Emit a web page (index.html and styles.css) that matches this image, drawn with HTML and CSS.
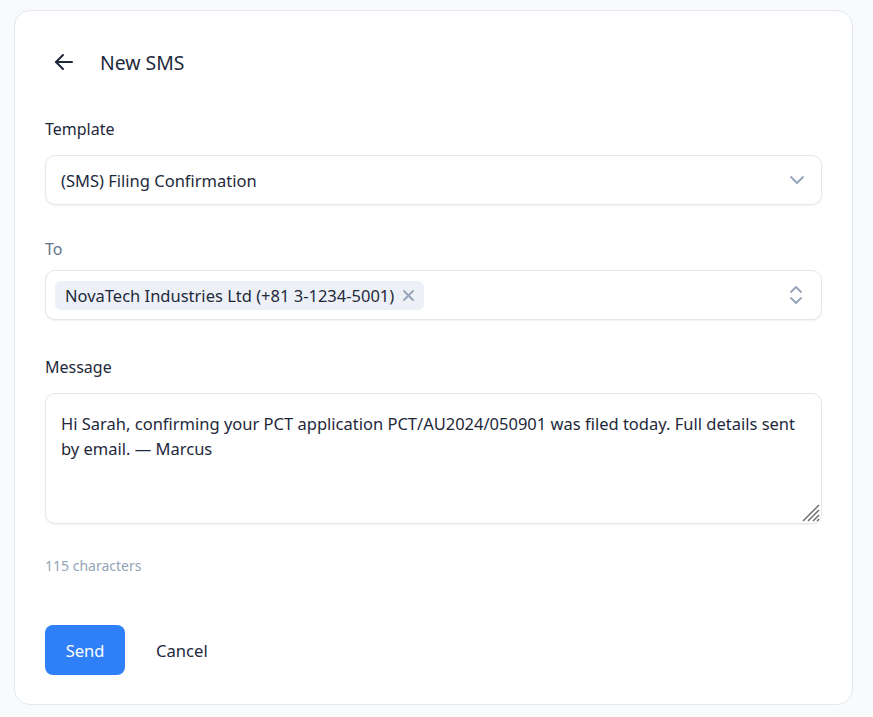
FILE: index.html
```html
<!DOCTYPE html>
<html lang="en">
<head>
    <meta charset="UTF-8">
    <meta name="viewport" content="width=device-width, initial-scale=1.0">
    <title>New SMS</title>
    <link rel="stylesheet" href="styles.css">
</head>
<body>
    <div class="card">
        <div class="header">
            <button class="back" aria-label="Back">
                <svg width="20" height="18" viewBox="0 0 20 18" fill="none" stroke="#1e293b" stroke-width="2" stroke-linecap="round" stroke-linejoin="round">
                    <path d="M18 9H2"/>
                    <path d="M9 2L2 9l7 7"/>
                </svg>
            </button>
            <h1>New SMS</h1>
        </div>

        <div class="field">
            <label class="label">Template</label>
            <div class="input select">
                <span>(SMS) Filing Confirmation</span>
                <svg width="16" height="10" viewBox="0 0 16 10" fill="none" stroke="#94a3b8" stroke-width="1.8" stroke-linecap="round" stroke-linejoin="round">
                    <path d="M2 2l6 6 6-6"/>
                </svg>
            </div>
        </div>

        <div class="field to-field">
            <label class="label muted">To</label>
            <div class="input recipients">
                <span class="chip">
                    NovaTech Industries Ltd (+81 3-1234-5001)
                    <svg width="11" height="11" viewBox="0 0 11 11" fill="none" stroke="#94a3b8" stroke-width="1.8" stroke-linecap="round">
                        <path d="M1 1l9 9M10 1L1 10"/>
                    </svg>
                </span>
                <svg width="14" height="20" viewBox="0 0 14 20" fill="none" stroke="#94a3b8" stroke-width="1.8" stroke-linecap="round" stroke-linejoin="round">
                    <path d="M2 7l5-5 5 5"/>
                    <path d="M2 13l5 5 5-5"/>
                </svg>
            </div>
        </div>

        <div class="field message-field">
            <label class="label">Message</label>
            <div class="message-wrap">
                <textarea class="input message">Hi Sarah, confirming your PCT application PCT/AU2024/050901 was filed today. Full details sent by email. — Marcus</textarea>
                <svg class="grip" width="18" height="18" viewBox="0 0 18 18" fill="none" stroke="#6b6b6b" stroke-width="1.4">
                    <path d="M1 17L17 1"/>
                    <path d="M6 17L17 6"/>
                    <path d="M11 17l6-6"/>
                    <path d="M15 17l2-2"/>
                </svg>
            </div>
            <div class="count">115 characters</div>
        </div>

        <div class="actions">
            <button class="send">Send</button>
            <button class="cancel">Cancel</button>
        </div>
    </div>
</body>
</html>
```

FILE: styles.css
```css
body {
    font-family: "Noto Sans", "Open Sans", sans-serif;
    margin: 0;
    padding: 10px 20px 13px 14px;
    background-color: #f8fafc;
    color: #1e293b;
}
.card {
    background-color: white;
    border: 1px solid #e2e8f0;
    border-radius: 16px;
    padding: 31px 30px 29px 30px;
}
.header {
    display: flex;
    align-items: center;
    height: 40px;
    margin-bottom: 35px;
}
.back {
    border: none;
    background: none;
    padding: 0;
    margin-left: 9px;
    width: 20px;
    height: 18px;
    display: flex;
    cursor: pointer;
}
.header h1 {
    margin: 0 0 0 26px;
    font-size: 19.4px;
    font-weight: 400;
    color: #1e293b;
}
.field {
    display: flex;
    flex-direction: column;
    margin-bottom: 32px;
}
.to-field {
    margin-bottom: 35px;
}
.label {
    font-size: 16px;
    line-height: 24px;
    margin-bottom: 14px;
    color: #1e293b;
}
.to-field .label {
    margin-bottom: 9px;
}
.label.muted {
    color: #64748b;
}
.input {
    box-sizing: border-box;
    border: 1px solid #e2e8f0;
    border-radius: 10px;
    background: white;
    box-shadow: 0 1px 2px rgba(15, 23, 42, 0.06);
    font-family: inherit;
    font-size: 16.5px;
    color: #1e293b;
}
.select {
    height: 50px;
    display: flex;
    align-items: center;
    justify-content: space-between;
    padding: 0 16px 0 15px;
}
.recipients {
    height: 50px;
    display: flex;
    align-items: center;
    justify-content: space-between;
    padding: 0 18px 0 9px;
}
.chip {
    display: inline-flex;
    align-items: center;
    gap: 9px;
    background: #edf1f7;
    border-radius: 6px;
    padding: 3px 10px;
    line-height: 23px;
}
.message-field {
    margin-bottom: 50px;
}
.message-wrap {
    position: relative;
    display: flex;
}
.message {
    width: 100%;
    height: 131px;
    padding: 17px 15px 13px 15px;
    line-height: 25px;
    resize: none;
    outline: none;
}
.grip {
    position: absolute;
    right: 2px;
    bottom: 2px;
}
.count {
    margin-top: 32px;
    font-size: 14px;
    color: #94a3b8;
}
.actions {
    display: flex;
    align-items: center;
    gap: 11px;
}
.send {
    height: 50px;
    width: 80px;
    border: none;
    border-radius: 8px;
    background-color: #2f80f8;
    color: white;
    font-family: inherit;
    font-size: 16.5px;
    cursor: pointer;
}
.cancel {
    border: none;
    background: none;
    padding: 0 20px;
    font-family: inherit;
    font-size: 16.6px;
    color: #1e293b;
    cursor: pointer;
}
```
